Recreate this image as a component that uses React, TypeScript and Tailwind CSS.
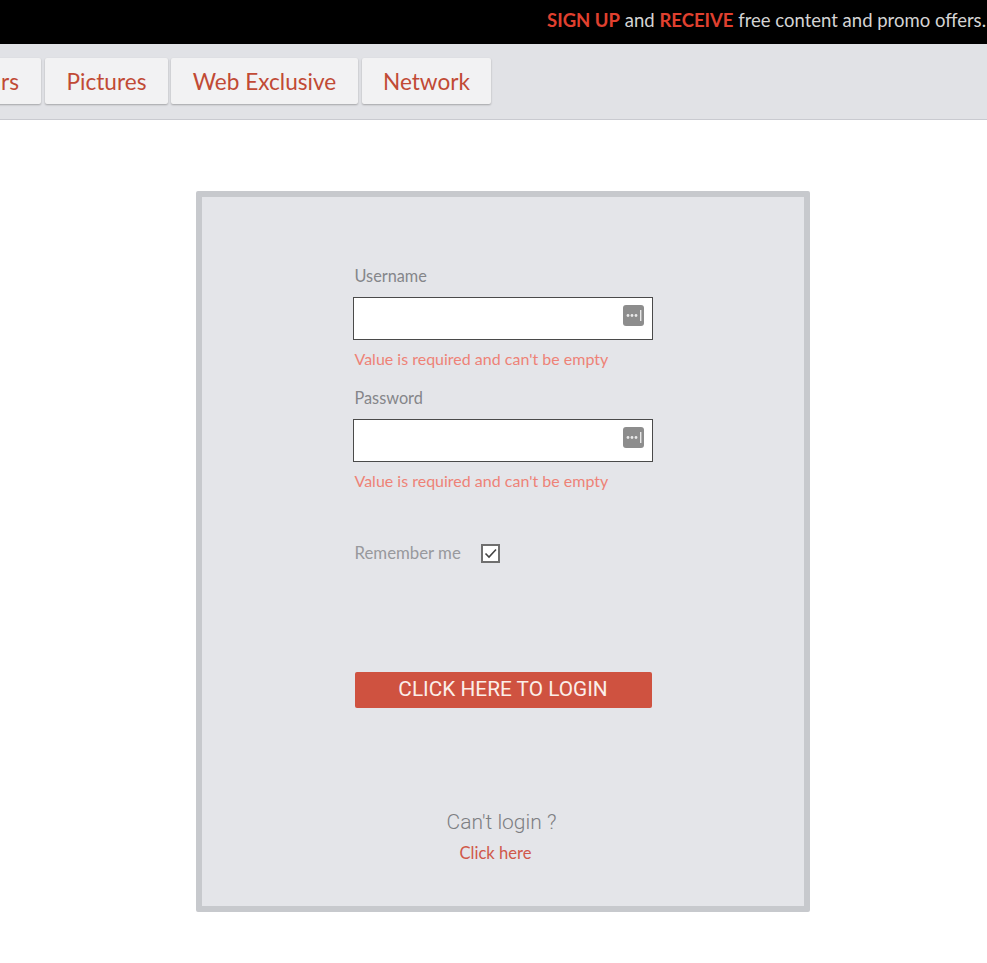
function KeyIcon() {
  return (
    <svg width="21" height="21" viewBox="0 0 21 21" className="absolute right-[8px] top-[7px]">
      <rect width="21" height="21" rx="3" fill="#8d8d8d" />
      <circle cx="5" cy="10.5" r="1.4" fill="#e8e8e8" />
      <circle cx="9" cy="10.5" r="1.4" fill="#e8e8e8" />
      <circle cx="13" cy="10.5" r="1.4" fill="#e8e8e8" />
      <rect x="17" y="5" width="1.4" height="11" fill="#e8e8e8" />
    </svg>
  );
}

function Field({ label }: { label: string }) {
  return (
    <div className="flex flex-col">
      <label className="pl-[2px] text-[16.3px] leading-[20px] text-[#85868a]">{label}</label>
      <div className="relative mt-[11px] h-[43px] w-[300px] border border-[#4a4a4a] bg-white">
        <input className="h-full w-full bg-transparent outline-none" aria-label={label} />
        <KeyIcon />
      </div>
      <p className="mt-[9px] pl-[2px] text-[16px] leading-[20px] text-[#ee8277]">Value is required and can't be empty</p>
    </div>
  );
}

function Tab({ children, className }: { children: React.ReactNode; className: string }) {
  return (
    <a className={`flex h-[46px] shrink-0 items-center justify-center rounded-[2px] bg-[#f2f2f3] pt-[2px] text-[22.6px] text-[#c14a35] shadow-[0_1px_2px_rgba(0,0,0,0.28)] ${className}`}>
      {children}
    </a>
  );
}

export default function App() {
  return (
    <div className="min-h-[963px] overflow-hidden bg-white font-['Lato','Noto_Sans',sans-serif]">
      <header className="flex h-[44px] items-center justify-end whitespace-nowrap bg-black pr-[1px] pb-[2px] text-[18.5px] text-[#d4d4d4]">
        <p>
          <b className="font-bold text-[#e0402f]">SIGN UP</b> and <b className="font-bold text-[#e0402f]">RECEIVE</b> free content and promo offers.
        </p>
      </header>
      <nav className="flex h-[76px] items-start gap-[3px] border-b border-[#c9cad0] bg-[#e1e2e6] pt-[14px]">
        <Tab className="ml-[-30px] w-[71px] !justify-end pr-[22px]">Stars</Tab>
        <Tab className="ml-[1px] w-[123px]">Pictures</Tab>
        <Tab className="w-[187px]">Web Exclusive</Tab>
        <Tab className="ml-[1px] w-[129px]">Network</Tab>
      </nav>
      <main className="flex justify-center pl-[18px] pt-[71px]">
        <form className="flex h-[721px] w-[614px] flex-col items-center rounded-[2px] border-[6px] border-[#c7c9cd] bg-[#e4e5e9] pt-[69px]">
          <div className="flex w-[300px] flex-col">
            <div className="flex flex-col gap-[19px]">
              <Field label="Username" />
              <Field label="Password" />
            </div>
            <div className="mt-[52px] flex items-center pl-[2px]">
              <span className="text-[16.8px] leading-[20px] text-[#98999d]">Remember me</span>
              <span className="ml-[20px] flex h-[19px] w-[19px] items-center justify-center border-2 border-[#6f6f6f] bg-white">
                <svg width="13" height="11" viewBox="0 0 13 11" fill="none">
                  <path d="M1.5 5.5 L5 9 L12 1.5" stroke="#444" strokeWidth="1.6" />
                </svg>
              </span>
            </div>
            <button type="button" className="mt-[109px] ml-[2px] h-[36px] w-[297px] rounded-[2px] bg-[#cf5240] font-['Roboto',sans-serif] text-[20.8px] text-[#fbeee9]">
              CLICK HERE TO LOGIN
            </button>
          </div>
          <div className="mt-[100px] flex w-[300px] flex-col items-center pr-[2px]">
            <p className="font-['Roboto',sans-serif] text-[21px] leading-[28px] font-light text-[#7d7e82]">Can't login ?</p>
            <a className="mt-[6px] mr-[12px] text-[16.6px] leading-[22px] text-[#d0584a]">Click here</a>
          </div>
        </form>
      </main>
    </div>
  );
}
